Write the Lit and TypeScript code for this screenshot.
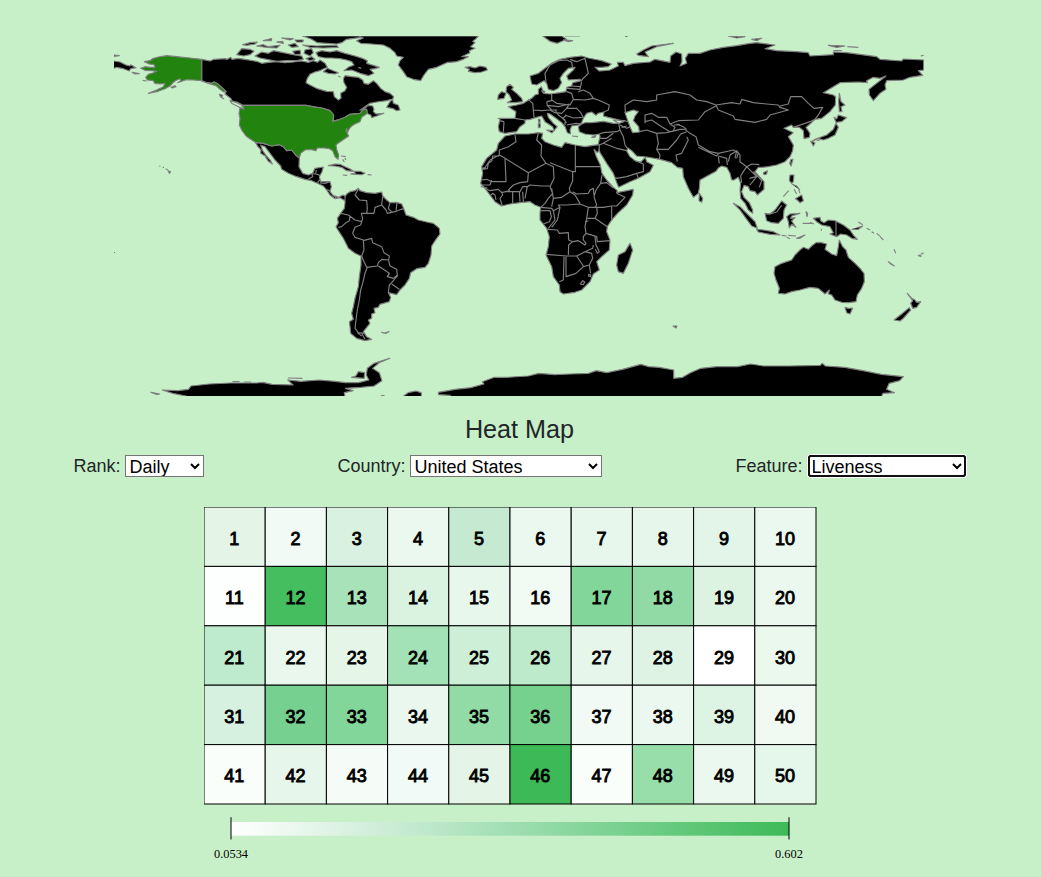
import { LitElement, html, svg, css } from "lit";
import { customElement, state } from "lit/decorators.js";

// Outlines are drafted per region on a grid three times finer than the map.
const NORTH_AMERICA = [
  // Canada
  "M-85,88 -60,93 -48,88 -15,86 -8,88 2,82 6,88 25,85 45,88 80,94 95,100 115,97 140,95 165,98 190,96 215,93 235,97 250,92 262,97 270,90 285,100 292,112 278,118 270,122 255,126 240,133 232,145 228,158 240,165 262,176 290,184 310,185 313,200 325,210 333,205 332,190 345,182 350,172 342,158 340,146 345,137 365,140 385,142 398,150 402,160 415,163 430,152 440,160 452,175 465,185 480,190 491,200 488,207 470,212 440,216 420,220 405,230 390,241 405,234 415,226 428,228 432,238 430,245 438,252 462,250 440,258 425,263 422,255 410,250 410,238 400,238 390,250 360,253 345,262 330,268 310,274 311,255 300,242 275,234 250,230 228,226 38,226 25,218 6,213 2,205 -15,192 -12,184 -25,172 -35,163 -47,156 -55,160 -70,158 -85,152Z",
  // Mexico and Central America
  "M76,337 100,340 125,348 148,344 160,350 170,362 185,360 198,376 208,384 207,410 218,430 235,435 248,430 255,415 280,411 276,425 268,440 272,455 300,455 304,470 300,485 310,497 325,502 340,495 352,503 345,512 330,503 315,506 300,495 290,480 280,468 262,460 245,452 225,448 200,440 175,430 155,418 152,408 135,390 120,370 105,350 92,345 98,362 108,376 122,392 127,402 115,394 105,378 92,370 93,360 84,350Z",
  // Caribbean
  "M295,407 315,402 330,403 345,410 362,418 370,424 350,422 335,412 315,408Z",
  "M372,424 390,424 405,430 395,434 378,433 362,432 376,430Z",
  "M338,435 352,436M413,434 425,435M333,378 347,380M338,388 343,396M345,384 347,390",
  // Newfoundland
  "M470,232 480,215 488,208 490,220 505,226 510,240 500,242 490,236Z",
  // Greenland and Iceland
  "M372,18 400,24 380,32 392,40 425,42 460,45 480,55 495,68 500,78 520,82 510,92 505,105 520,125 530,140 550,148 572,152 582,135 595,118 620,112 650,98 680,95 700,88 715,80 695,80 720,68 718,62 735,55 722,50 735,38 728,34 738,26 745,18Z",
  "M705,112 720,110 735,114 750,108 768,112 772,120 755,126 735,128 715,124 718,118Z",
  // Arctic islands
  "M258,68 275,62 300,66 320,62 345,70 375,78 400,86 412,92 410,100 430,106 448,112 435,116 420,118 432,130 415,137 390,130 365,120 342,122 355,112 372,105 365,95 350,90 330,86 305,84 285,84 265,80Z",
  "M280,125 292,115 310,122 325,128 315,132 295,130Z",
  "M325,138 332,142M385,112 394,115",
  "M218,18 385,18 395,22 350,28 335,38 320,42 290,40 262,38 245,28Z",
  "M75,78 95,66 115,70 130,62 160,68 190,74 215,78 220,88 200,92 170,92 140,94 110,88 90,84Z",
  "M20,74 35,56 60,58 72,64 60,74 40,78Z",
  "M38,44 60,38 82,36 75,42 50,46Z",
  "M80,48 100,44 115,50 150,46 140,54 110,52Z",
  "M155,24 190,26 180,30Z",
  "M175,45 195,40 205,50 185,52Z",
  "M188,64 210,60 212,72 195,74Z",
  "M218,45 260,48 320,46 325,52 280,54 240,52Z",
  "M225,60 245,56 250,68 240,78 222,70Z",
  "M195,30 220,30 218,36 200,36Z",
  "M228,86 245,80 255,88 240,92Z",
  "M100,32 125,26 124,32ZM140,36 158,34 160,40Z",
  // Chukotka across the date line
  "M-348,75 -332,77 -348,79M-348,93 -330,96 -312,105 -300,108 -298,104 -282,113 -298,116 -302,123 -320,116 -340,112 -348,115",
  "M-294,127 -272,131 -285,132Z",
  "M-32,193 -22,196 -26,202 -19,206 -28,201Z",
];
const NORTH_AMERICA_LINES = [
  "M0,212 18,217 35,226 41,238 25,230 5,220Z",
  "M235,447 248,440 246,432 257,432 259,420M262,460 268,450 274,456M270,459 285,460 300,455M290,479 302,483M258,432 270,436M318,497 316,506",
];
const UNITED_STATES = [
  "M38,226 228,226 250,231 275,234 300,242 311,255 308,274 330,268 345,262 360,253 390,250 400,238 410,238 412,250 395,262 390,275 375,282 365,288 358,296 352,308 350,296 348,302 356,318 335,332 318,344 320,358 326,375 324,388 315,380 308,362 298,356 282,354 262,354 258,362 240,358 225,360 212,370 208,384 198,376 185,360 170,362 160,350 148,344 125,348 100,340 76,337 62,328 48,318 35,300 28,285 30,265 27,250 30,233 42,238Z",
  "M-85,88 -120,84 -160,80 -190,77 -215,81 -232,86 -240,92 -257,95 -242,102 -228,104 -225,112 -240,112 -255,110 -268,115 -255,121 -235,122 -220,124 -232,129 -245,133 -253,142 -248,150 -230,152 -226,160 -210,162 -195,160 -200,170 -220,180 -245,190 -220,185 -195,176 -180,168 -170,157 -160,150 -150,146 -148,152 -157,158 -132,149 -110,150 -85,152 -70,158 -55,160 -47,156 -35,163 -25,172 -12,184 -18,186 -30,178 -42,167 -60,162 -85,152Z",
  "M-177,172 -165,167 -162,170 -173,174ZM-262,151 -250,153M-212,408 -209,409M-202,412 -198,412M-193,416 -187,419M-186,422 -178,425 -182,430Z",
];
const SOUTH_AMERICA = [
  "M135,80 140,72 150,65 165,62 175,55 180,62 200,68 225,70 245,66 248,78 260,90 270,98 290,97 305,102 312,118 318,135 340,142 355,150 380,156 400,160 418,175 420,192 408,208 395,228 393,255 385,280 375,292 350,296 332,308 328,325 315,345 300,360 290,374 265,368 272,382 268,395 240,403 235,412 222,415 225,428 215,432 215,445 205,450 210,460 198,475 190,485 200,500 215,508 195,512 170,505 152,490 150,470 148,455 160,448 155,430 160,410 165,385 175,350 178,320 183,285 183,258 165,250 145,235 130,205 115,182 108,170 115,158 112,145 122,130 133,115 135,100Z",
  "M245,487 254,489 267,485 258,490Z",
];
const SOUTH_AMERICA_LINES = [
  "M175,58 165,75 178,90 200,92 202,115 200,130 184,130 188,145 182,165M122,130 145,135 165,150 185,155M150,140 148,152 138,158 125,170 115,172M200,130 222,130 225,112 245,105 248,80M245,105 258,120 262,130 285,125 304,118 312,116M270,98 265,115 276,127M291,98 288,122",
  "M182,165 165,172 158,190 165,202 190,210 192,240 185,258 192,275 200,292 232,288 235,278 245,268 266,270 268,258 252,248 245,230 218,218 215,205 190,212M266,272 270,288 290,298 292,315 280,325 262,320 268,310 235,288M202,292 195,310 188,340 182,360 178,390 172,420 168,450 165,475 175,488 195,490M294,315 275,338 268,345 265,368M275,342 298,358M185,490 195,508M172,488 185,498",
];
const EURASIA = [
  "M180,138 205,130 225,115 245,100 270,88 300,82 335,78 355,84 385,90 395,92 424,102 415,110 395,112 375,112 388,123 400,122 420,120 445,108 442,97 460,97 465,107 490,100 540,96 555,88 600,97 602,78 618,66 635,72 636,95 630,108 650,100 646,85 655,70 690,70 720,60 760,52 800,47 840,40 860,38 915,45 885,56 920,62 980,65 1015,68 1020,78 1090,74 1090,66 1130,68 1220,80 1230,88 1295,93 1300,87 1361,90 1361,120 1345,122 1358,136 1320,142 1300,150 1250,152 1245,165 1248,178 1230,190 1210,212 1198,195 1197,178 1212,166 1248,138 1230,145 1210,142 1190,152 1192,158 1165,156 1110,158 1060,188 1090,195 1097,200 1096,225 1080,245 1055,265 1035,268 1020,282 1008,292 1020,310 1018,322 1002,326 1000,302 988,292 970,292 965,285 942,295 970,308 955,320 970,345 968,362 960,380 945,395 920,405 895,410 876,412 865,412 855,425 868,440 882,455 882,478 862,495 855,485 840,482 835,470 822,466 815,485 822,502 838,518 848,540 848,550 835,540 825,520 812,505 810,480 812,460 805,442 792,450 785,450 780,430 770,412 755,408 745,414 738,424 690,450 688,475 685,490 670,502 655,475 640,440 638,415 622,412 605,398 570,388 530,381 500,378 485,362 474,354 470,362 480,380 498,394 512,396 526,382 530,395 550,406 540,425 505,445 480,455 446,472 439,455 430,430 410,400 390,368 384,345 390,320 388,312 370,315 345,312 328,305 325,290 335,282 345,278 365,278 400,274 430,280 448,280 462,275 440,268 415,262 400,258 402,246 384,250 378,256 365,246 350,250 340,265 335,278 325,285 305,288 300,300 302,312 292,308 285,290 275,278 262,268 240,252 232,250 235,262 250,280 262,290 252,302 248,290 225,275 215,258 200,262 180,268 165,270 165,280 150,290 140,305 105,310 88,305 85,290 90,268 85,265 135,265 138,245 115,230 140,225 160,220 185,205 195,195 205,192 205,178 214,170 218,180 222,190 240,192 270,188 288,185 290,172 305,168 308,158 335,152 330,148 295,150 290,138 310,120 315,112 295,115 280,130 270,145 275,158 265,175 250,182 235,178 230,160 222,152 200,165 185,162Z",
  "M110,170 120,163 130,172 125,178 140,190 155,205 158,215 135,218 112,218 125,210 118,195 108,185Z",
  "M85,195 95,185 108,190 102,205 83,208Z",
  "M205,268 210,268 210,278 206,276ZM205,280 211,282 210,293 205,293ZM230,300 252,302 246,309ZM306,318 324,320M365,322 378,316 375,322ZM215,182 225,184 221,190Z",
  "M218,18 275,18 290,28 262,40 240,34ZM280,30 308,32 295,35ZM285,18 330,18",
  "M500,72 520,60 545,48 610,40 560,50 525,66 535,80 505,76Z",
  "M775,18 825,20 800,24ZM845,28 875,25 860,32ZM1075,46 1125,48 1100,52ZM1132,50 1165,52M1090,62 1115,62M1352,78 1361,76M465,19 473,19",
  "M1108,190 1113,215 1125,225 1113,230 1116,245 1108,245 1106,215Z",
  "M1092,262 1100,266 1105,255 1130,263 1115,275 1098,277Z",
  "M1098,280 1105,292 1095,315 1075,325 1060,330 1045,325 1025,335 1035,328 1070,315 1090,298Z",
  "M1022,333 1035,338 1030,348ZM1040,332 1052,329",
  "M963,388 969,388 963,408 959,400ZM880,428 892,422 890,432 882,434ZM688,490 698,505 695,517 687,512Z",
];
const EURASIA_LINES = [
  "M228,158 225,130 240,105 265,92 290,90 305,97 308,115M300,88 320,95 345,85 355,130 335,150M290,175 330,178 335,155M305,168 330,170M325,185 340,180 360,190 370,205 345,210 310,208 305,190 290,185M245,192 245,210 260,220 300,225 310,208M230,215 245,212M230,215 232,226 265,230 298,222M232,226 245,240 262,240M370,205 385,210 418,225 415,240 402,246M298,222 290,235 320,235 332,248 340,262M285,255 310,264 338,262M290,235 275,250 255,248 240,240",
  "M175,208 188,220M188,218 190,240 215,242 240,240M190,240 192,262M102,275 100,305M88,272 102,275M135,265 165,270M255,240 265,255 285,270 285,285M290,278 278,265 290,256M290,285 318,280 330,282",
  "M388,312 400,308 440,305 450,300 446,280 430,270 465,272 485,280M450,285 470,295 482,290M455,292 470,288M450,300 460,320 465,345 472,355M390,325 410,325 430,310M400,340 440,355 470,362M388,345 400,340 425,325M498,392 520,402 520,425 500,430 505,445M500,430 470,440 440,445 436,442",
  "M466,248 465,225 490,210 530,215 560,210 560,195 615,185 660,195 680,210 710,215 738,225 785,218 810,222 815,208 850,218 890,222 925,225 930,232 955,240 900,255 890,268 855,277 795,268 790,258 745,240 738,225M930,228 955,222 962,200 995,200 1015,220 1032,235 1058,232 1048,250 1035,268 1020,275 970,292",
  "M525,280 525,255 545,250 565,262 590,262 600,282 625,272 685,270 705,245 738,228M508,305 530,300 560,310M525,275 545,270 575,290 600,305M560,310 590,308 630,298 645,298M560,310 565,340 560,358 570,375 568,388M560,358 595,358 620,330 632,312 650,305M600,282 615,292 608,305M620,282 640,290 650,298M612,285 630,284",
  "M645,298 660,310 678,320 685,345 720,365 745,370 790,360 805,368 800,385M622,395 618,375 635,370 655,330 650,320M685,352 740,378 745,372M745,380 748,400M745,378 770,385 772,405M800,362 795,385M775,395 780,375 800,362 810,375 810,395 830,410 820,425 812,438 815,458M830,410 845,402 868,404M830,410 850,430 860,440 840,465M850,425 875,452 868,472M838,445 858,440",
];
const OCEANIA = [
  "M210,105 222,105 220,125 215,130 208,122Z",
  "M215,132 230,138 240,150M222,148 230,162M236,148 240,160M212,62 213,70",
  "M226,176 245,165 250,182 240,188 232,180Z",
  "M190,170 206,152",
  "M40,190 60,200 85,225 105,245 112,265 95,258 78,235 60,210Z",
  "M110,268 130,270 160,275 180,285 150,283 115,276Z",
  "M185,286 200,288M205,286 228,288M200,292 210,296M230,295 255,285 240,295Z",
  "M135,220 150,222 165,210 185,183 200,195 192,210 190,235 175,250 155,248 140,242Z",
  "M200,230 210,222 240,220 215,228 212,235 225,233 215,243 228,262 215,253 208,264 205,245Z",
  "M258,215 263,220 261,230ZM248,250 275,250M270,247 282,252M304,266 304,272",
  "M280,235 300,232 302,242 312,248 325,240 345,242 370,255 390,270 400,285 412,298 395,295 380,285 362,282 350,290 330,282 340,278 330,260 305,255 290,245Z",
  "M395,268 415,268 428,258 415,262M415,246 428,254M440,265 450,270M455,275 462,280M470,280 482,290M480,290 490,300M522,328 527,340M505,365 523,378 512,372ZM595,347 603,349 601,345ZM603,343 611,338",
  "M165,380 185,370 215,360 225,345 240,330 250,322 265,328 275,318 288,308 300,307 320,312 315,328 335,342 350,347 355,320 358,300 368,320 378,330 385,352 405,370 420,385 432,400 433,425 425,445 412,465 408,485 385,488 365,487 345,480 335,465 325,462 328,450 315,462 295,445 270,442 240,450 215,455 195,462 175,460 178,445 168,420 162,400Z",
  "M375,502 385,505 398,504 390,522 380,518Z",
  "M562,460 575,475 585,480 590,487 602,485 590,502 578,505 572,490 578,482Z",
  "M568,503 572,510 550,535 540,543 522,540 545,522Z",
];
const OCEANIA_LINES = ["M138,222 150,222 170,216 185,196", "M348,242 348,288"];
const AFRICA = [
  "M105,48 135,42 175,42 205,38 218,40 215,55 225,65 250,75 275,82 285,68 315,75 345,80 370,76 388,74 387,92 382,98 372,88 378,107 391,135 396,160 410,180 430,202 442,212 440,218 490,208 488,225 470,255 445,278 425,300 412,320 410,335 420,360 418,390 395,410 380,425 388,450 370,462 360,485 335,510 315,517 280,522 270,515 268,495 250,470 245,440 228,405 235,380 238,350 230,325 210,300 210,280 212,262 195,255 180,245 150,248 120,252 95,258 75,245 60,225 45,205 32,190 38,160 35,140 50,115 80,90 85,70Z",
  "M480,370 488,390 475,430 460,460 445,455 440,435 445,405 465,395Z",
];
const AFRICA_LINES = [
  "M35,145 45,143 60,120 88,105 88,90 115,80 138,65 135,45M88,105 105,115 175,158 228,130 213,108 215,75 200,60 205,40M35,148 52,146 55,130 66,122 68,108 88,108M105,115 108,185 65,185 50,178 35,180M175,158 173,185 150,188 130,195 115,210M228,130 250,140 252,175 240,200M240,128 308,155 308,182 298,205 300,215M316,75 316,140 393,140M316,140 316,155 308,155M240,198 215,198 180,195 172,200 165,235M110,215 150,215 158,200 172,200M128,215 128,250M148,215 150,245M158,215 160,245M95,215 98,225 90,235 97,258M32,195 60,195 65,180M45,205 60,212 85,208 95,218 120,212M60,228 68,220 75,225 78,240M32,200 52,204",
  "M240,200 248,220 235,235 225,250 212,262M245,205 250,235 245,260M250,235 275,232 300,215 315,225 330,250M212,262 245,265 250,272 270,262 265,255 290,255 330,252 355,262 375,262 380,255 372,230 378,210 392,190 410,188 430,204M308,215 320,222 355,220 360,210 370,205 372,225M392,190 396,165M375,262 400,262 425,258 440,258 465,232 440,220M425,260 425,298M380,262 382,280 375,295 412,320M355,262 350,295 375,295M350,295 345,320 348,340 380,350 382,365 420,362M345,305 355,303M212,272 240,272 244,290 238,305 220,312M250,272 255,300 235,325M270,262 262,300 245,322",
  "M232,328 262,330 268,340 295,338 296,360 308,365 325,362 345,375 348,370 340,360 340,350 348,340M308,365 296,375 295,405M228,403 290,408 320,408 345,395 368,385 370,375M282,410 280,480 268,485M288,410 288,470 318,460 340,440 358,435 368,415 365,400 345,395M320,408 340,438M358,435 362,460M375,350 378,375 388,395 382,400 376,388M338,482 344,486 340,494 331,492ZM356,463 363,465 361,470 355,468Z",
];
const ANTARCTICA = [
  "M145,175 145,168 120,160 100,150 130,152 150,148 155,138 190,132 230,129 280,129 292,127 310,133 350,135 340,120 365,124 400,120 430,124 450,128 475,128 495,120 490,105 492,85 505,70 535,55 515,68 502,85 515,98 520,122 505,138 480,142 450,145 465,152 448,158 450,175Z",
  "M558,172 570,158 585,153 595,158 596,172Z",
  "M628,164 628,157 660,148 690,143 715,132 712,125 735,112 760,112 800,108 820,100 850,104 880,102 915,100 930,92 950,98 980,88 1015,73 1030,80 1050,82 1078,90 1078,115 1095,112 1110,98 1130,85 1160,80 1200,80 1225,72 1250,78 1300,78 1358,76 1362,70 1368,78 1405,82 1440,92 1475,103 1517,110 1510,122 1490,130 1485,148 1500,158 1478,160 1474,175 656,175 650,166Z",
  "M78,157 95,162 88,163ZM462,112 470,108 475,95 487,98 486,115ZM340,114 368,115M234,125 248,125M256,126 270,126M518,167 525,167",
];
const ANTARCTICA_STRETCH = 820 / 1568;
const CASPIAN_SEA = "M465,248 490,240 505,245 495,258 490,272 506,290 508,306 488,308 480,290 472,268Z";

interface Region { x: number; y: number; kx: number; land: string[]; lines: string[]; }
const REGIONS: Region[] = [
  { x: 116, y: -6, kx: 1 / 3, land: NORTH_AMERICA, lines: NORTH_AMERICA_LINES },
  { x: 186, y: 134, kx: 1 / 3, land: SOUTH_AMERICA, lines: SOUTH_AMERICA_LINES },
  { x: 356, y: -6, kx: 1 / 3, land: EURASIA, lines: EURASIA_LINES },
  { x: 356, y: 84, kx: 1 / 3, land: AFRICA, lines: AFRICA_LINES },
  { x: 606, y: 104, kx: 1 / 3, land: OCEANIA, lines: OCEANIA_LINES },
  { x: -4, y: 304, kx: ANTARCTICA_STRETCH, land: ANTARCTICA, lines: [] },
];

const COLORS = [
  "#e4f5e8", "#f1faf5", "#d8f1e0", "#ebf8ef", "#c6ead1", "#ebf8ef", "#e8f7ec", "#e7f6eb", "#e3f5e8", "#ebf8ef",
  "#fdfefe", "#45be60", "#a7e2b8", "#daf2e0", "#e8f7ec", "#f1faf3", "#82d69a", "#91daa6", "#dcf3e2", "#ebf8ee",
  "#beeacd", "#e9f7ed", "#e5f5e8", "#a3e1b7", "#cdefd8", "#beeacc", "#e6f6eb", "#dff3e5", "#ffffff", "#eaf8ee",
  "#d7f1e0", "#76d190", "#82d69a", "#e9f7ee", "#92daa6", "#76d18f", "#f1faf5", "#ebf8f0", "#ddf3e4", "#f0faf2",
  "#f9fefa", "#e6f6ea", "#f5fcf8", "#f1faf6", "#e4f5e7", "#3dba57", "#f9fefa", "#98deab", "#ebf8ef", "#e5f6ea",
];

@customElement("world-map")
class WorldMap extends LitElement {
  static styles = css`
    :host { display: block; width: 810px; height: 360px; }
    svg { display: block; }
    path { stroke: #808080; stroke-width: 1.15; vector-effect: non-scaling-stroke; stroke-linejoin: round; }
    .land { fill: #000; }
    .line { fill: none; }
    .picked { fill: #22830f; }
    .sea { fill: #c8f0c8; }
  `;
  render() {
    return html`<svg width="810" height="360" viewBox="0 0 810 360">
      ${REGIONS.map(r => svg`<g transform="translate(${r.x} ${r.y}) scale(${r.kx} .33333)">
        ${r.land.map(d => svg`<path class="land" d=${d}></path>`)}
        ${r.lines.map(d => svg`<path class="line" d=${d}></path>`)}
      </g>`)}
      <g transform="translate(356 -6) scale(.33333)"><path class="sea" d=${CASPIAN_SEA}></path></g>
      <g transform="translate(116 -6) scale(.33333)">
        ${UNITED_STATES.map(d => svg`<path class="picked" d=${d}></path>`)}
      </g>
      <path class="land" d="M559,290 l4,0 -1,2z"></path>
      <path class="land" d="M0,216.500 h1"></path>
    </svg>`;
  }
}

@customElement("rank-grid")
class RankGrid extends LitElement {
  static styles = css`
    :host { display: block; width: 613px; height: 298px; }
    svg { display: block; }
    rect { stroke: #000; stroke-width: 1; }
    text { font: 18px "Liberation Sans", Arial, sans-serif; text-anchor: middle; fill: #000; stroke: #000; stroke-width: .9; }
  `;
  render() {
    return html`<svg width="613" height="298">
      ${COLORS.map((color, i) => {
        const x = (i % 10) * 61.2;
        const y = Math.floor(i / 10) * 59.4;
        return svg`<rect x=${x} y=${y} width="61.2" height="59.4" fill=${color}></rect>
          <text x=${x + 30.3} y=${y + 37.7}>${i + 1}</text>`;
      })}
    </svg>`;
  }
}

@customElement("color-legend")
class ColorLegend extends LitElement {
  static styles = css`
    :host { display: block; width: 620px; height: 48px; }
    svg { display: block; }
    .tick { stroke: #000; stroke-opacity: .5; stroke-width: 2; }
    text { font: 12.4px "Liberation Serif", "Times New Roman", serif; text-anchor: middle; fill: #000; }
  `;
  render() {
    return html`<svg width="620" height="48">
      <defs><linearGradient id="ramp">
        <stop offset="0" stop-color="#ffffff"></stop>
        <stop offset=".33" stop-color="#c3e9cf"></stop>
        <stop offset=".66" stop-color="#7fd396"></stop>
        <stop offset="1" stop-color="#3dba57"></stop>
      </linearGradient></defs>
      <rect x="31" y="5" width="558" height="13.700" fill="url(#ramp)"></rect>
      <path class="tick" d="M31,0.300V22.600M589,0.300V22.600"></path>
      <text x="31" y="41">0.0534</text>
      <text x="589" y="41">0.602</text>
    </svg>`;
  }
}

@customElement("app-root")
class AppRoot extends LitElement {
  static styles = css`
    :host { display: block; box-sizing: border-box; width: 1041px; height: 877px; overflow: hidden; padding-top: 36px; background: #c8f0c8; color: #212529; font: 18px/22px "Liberation Sans", Arial, sans-serif; }
    world-map { margin-left: 114px; }
    h1 { margin: 18px 2px 0 0; font-size: 25.2px; line-height: 30px; font-weight: 400; text-align: center; }
    .controls { display: flex; gap: 133px; margin-top: 11px; padding-left: 73.4px; }
    .field { display: flex; align-items: center; gap: 5px; }
    select { box-sizing: border-box; height: 22px; margin: 0; padding: 0; border: 1px solid #767676; border-radius: 0; background-color: #fff; color: #000; font: 18px/20px "Liberation Sans", Arial, sans-serif; text-indent: -1px; }
    .rank { width: 79px; }
    .country { width: 192px; }
    .feature { width: 158px; border-color: #101010; border-radius: 3px; outline: 2px solid #101010; outline-offset: -2px; box-shadow: 0 0 0 1px #fff; }
    rank-grid { margin: 30px 0 0 204px; }
    color-legend { margin: 12px 0 0 200px; }
  `;
  @state() private fields = [
    { label: "Rank:", value: "Daily", kind: "rank" },
    { label: "Country:", value: "United States", kind: "country" },
    { label: "Feature:", value: "Liveness", kind: "feature" },
  ];
  render() {
    return html`
      <world-map></world-map>
      <h1>Heat Map</h1>
      <div class="controls">
        ${this.fields.map(f => html`<label class="field"><span>${f.label}</span><select class=${f.kind}><option>${f.value}</option></select></label>`)}
      </div>
      <rank-grid></rank-grid>
      <color-legend></color-legend>`;
  }
}
